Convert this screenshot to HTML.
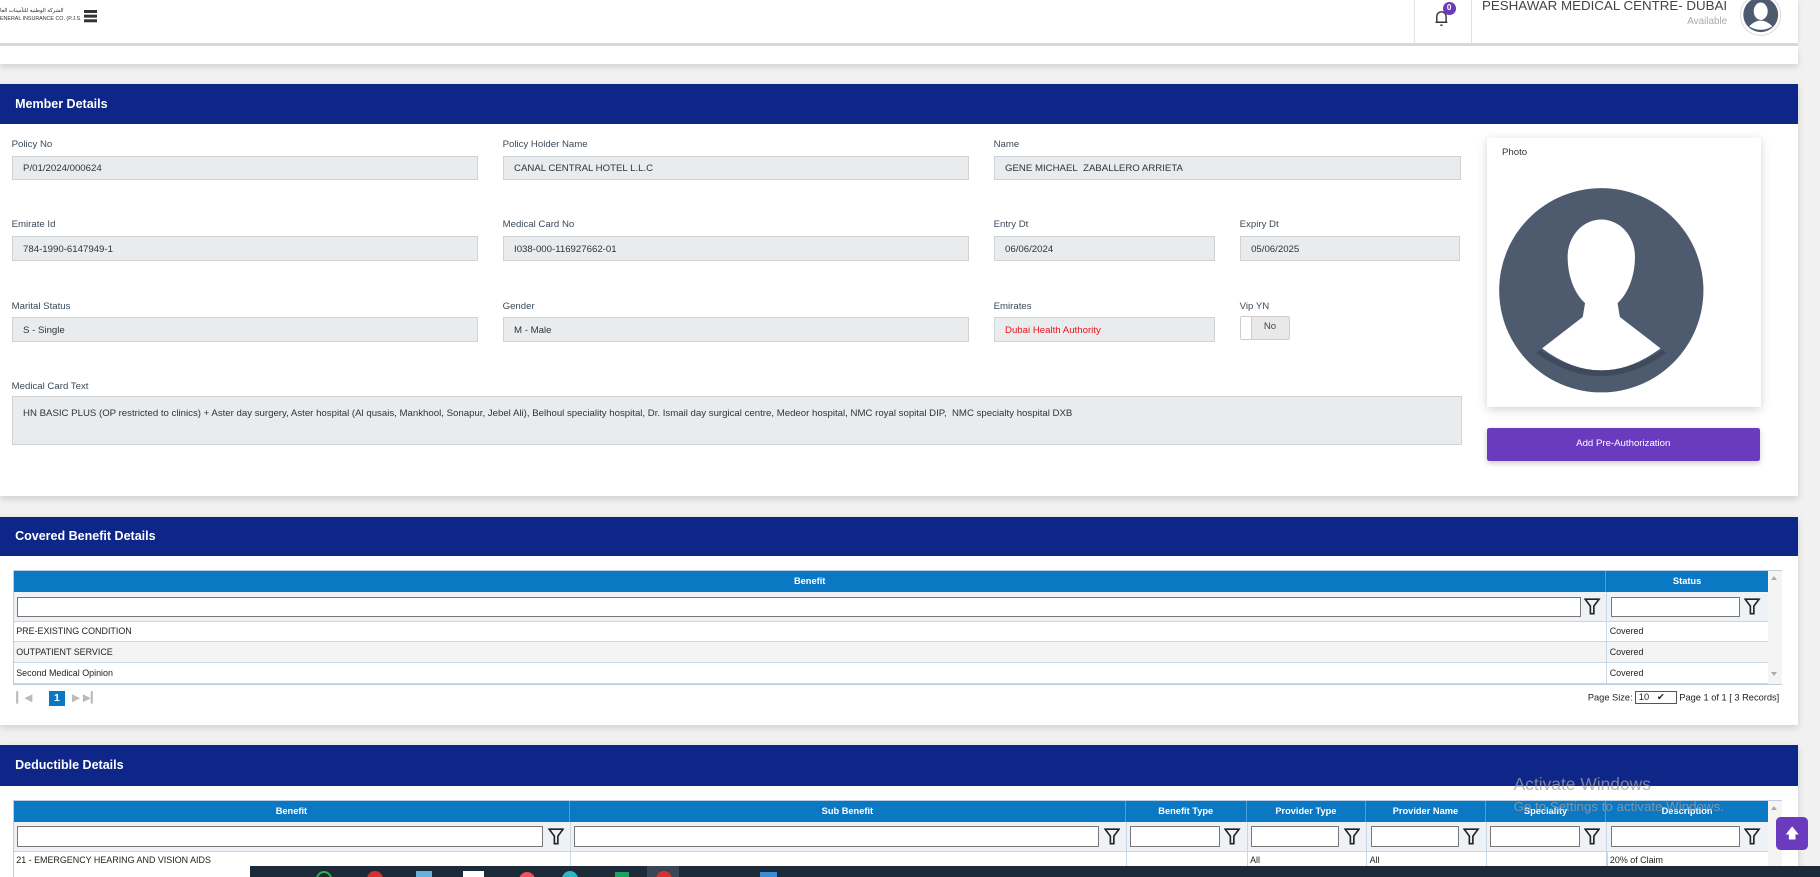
<!DOCTYPE html>
<html><head><meta charset="utf-8"><style>
html,body{margin:0;padding:0;}
body{width:1820px;height:877px;overflow:hidden;background:#f1f1f1;font-family:"Liberation Sans",Arial,sans-serif;}
#w{zoom:1.160714;position:relative;width:1568px;height:756px;overflow:hidden;background:#f1f1f1;}
.a{position:absolute;}
.card{position:absolute;background:#fff;box-shadow:0 2px 6px rgba(0,0,0,.15);}
.bar{position:absolute;background:#0e2687;color:#fff;font-weight:bold;font-size:10.8px;padding-left:13px;box-sizing:border-box;}
.lbl{position:absolute;font-size:8.3px;color:#3a4a5a;}
.inp{position:absolute;height:21px;background:#e9ebed;border:1px solid #cfd3d6;box-sizing:border-box;font-size:8.3px;color:#333;padding:6px 0 0 9px;}
.th{position:absolute;background:#0b78c3;color:#fff;font-weight:bold;font-size:8px;text-align:center;height:18px;line-height:18px;border-right:1px solid #4aa0dd;box-sizing:border-box;}
.fc{position:absolute;background:#eef2f6;height:26px;box-sizing:border-box;}
.fc i{position:absolute;left:3px;top:4px;height:18px;border:1px solid #777;background:#fff;box-sizing:border-box;}
.fc svg{position:absolute;top:5px;}
.row{position:absolute;height:18px;line-height:18px;font-size:7.7px;color:#222;border-bottom:1px solid #c9d6e3;box-sizing:border-box;padding-left:2px;}
</style></head><body><div id="w">
<div class="a" style="left:0;top:0;width:1549px;height:37px;background:#fff;box-shadow:0 1px 3px rgba(0,0,0,.15)"></div>
<div class="a" style="left:0;top:37px;width:1549px;height:3px;background:#d3ddd0"></div>
<div class="a" style="left:0;top:40px;width:1549px;height:15px;background:#fff;box-shadow:0 3px 5px rgba(0,0,0,.12)"></div>
<div class="a" style="left:0;top:6px;font-size:4.6px;color:#333;line-height:7px;width:70px;overflow:hidden;white-space:nowrap">الشركة الوطنية للتأمينات العا<br>ENERAL INSURANCE CO. (P.J.S.C)</div>
<div class="a" style="left:72px;top:9px;width:12px;height:2px;background:#333;box-shadow:0 4px 0 #333,0 8px 0 #333"></div>
<div class="a" style="left:1218px;top:0;width:1px;height:37px;background:#e3e3e3"></div>
<div class="a" style="left:1267px;top:0;width:1px;height:37px;background:#e3e3e3"></div>
<svg class="a" style="left:1233px;top:5px" width="20" height="20" viewBox="0 0 20 20"><path d="M4 14h10M5 14V9a4 4 0 0 1 8 0v5M8 16.5h2" stroke="#333" stroke-width="1.2" fill="none"/></svg>
<div class="a" style="left:1243px;top:2px;width:11px;height:11px;border-radius:50%;background:#6a3bbd;color:#fff;font-size:7px;font-weight:bold;text-align:center;line-height:11px">0</div>
<div class="a" style="left:1200px;width:288px;text-align:right;top:-2px;font-size:11.5px;color:#444">PESHAWAR MEDICAL CENTRE- DUBAI</div>
<div class="a" style="left:1400px;width:88px;text-align:right;top:14px;font-size:8.5px;color:#aaa">Available</div>
<div class="a" style="left:1499px;top:-5px;width:34px;height:34px;border-radius:50%;background:#fff;border:1px solid #ddd;overflow:hidden">
<svg width="34" height="34" viewBox="0 0 34 34"><circle cx="17" cy="17" r="15" fill="#4e5b6e"/><ellipse cx="17" cy="14" rx="6" ry="7.5" fill="#fff"/><path d="M7 27q10-10 20 0q-10 6-20 0z" fill="#fff"/></svg></div>
<div class="card" style="left:0;top:72px;width:1549px;height:355px"></div>
<div class="bar" style="left:0;top:72px;width:1549px;height:35px;line-height:35px">Member Details</div>
<div class="lbl" style="left:10px;top:120px">Policy No</div><div class="inp" style="left:10px;top:134px;width:402px">P/01/2024/000624</div>
<div class="lbl" style="left:433px;top:120px">Policy Holder Name</div><div class="inp" style="left:433px;top:134px;width:402px">CANAL CENTRAL HOTEL L.L.C</div>
<div class="lbl" style="left:856px;top:120px">Name</div><div class="inp" style="left:856px;top:134px;width:403px">GENE MICHAEL&nbsp; ZABALLERO ARRIETA</div>
<div class="lbl" style="left:10px;top:189px">Emirate Id</div><div class="inp" style="left:10px;top:203px;width:402px;height:22px">784-1990-6147949-1</div>
<div class="lbl" style="left:433px;top:189px">Medical Card No</div><div class="inp" style="left:433px;top:203px;width:402px;height:22px">I038-000-116927662-01</div>
<div class="lbl" style="left:856px;top:189px">Entry Dt</div><div class="inp" style="left:856px;top:203px;width:191px;height:22px">06/06/2024</div>
<div class="lbl" style="left:1068px;top:189px">Expiry Dt</div><div class="inp" style="left:1068px;top:203px;width:190px;height:22px">05/06/2025</div>
<div class="lbl" style="left:10px;top:259px">Marital Status</div><div class="inp" style="left:10px;top:273px;width:402px;height:22px">S - Single</div>
<div class="lbl" style="left:433px;top:259px">Gender</div><div class="inp" style="left:433px;top:273px;width:402px;height:22px">M - Male</div>
<div class="lbl" style="left:856px;top:259px">Emirates</div><div class="inp" style="left:856px;top:273px;width:191px;height:22px;color:#e8141b">Dubai Health Authority</div>
<div class="lbl" style="left:1068px;top:259px">Vip YN</div>
<div class="a" style="left:1068px;top:272px;width:43px;height:21px;background:#e9e9e9;border:1px solid #ccc;border-radius:2px;box-sizing:border-box"><div style="position:absolute;left:0;top:0;width:9px;height:19px;background:#fff;border-right:1px solid #ccc"></div><div style="position:absolute;left:20px;top:4px;font-size:8.3px;color:#444">No</div></div>
<div class="lbl" style="left:10px;top:328px">Medical Card Text</div>
<div class="inp" style="left:10px;top:341px;width:1250px;height:42px;padding-top:10px">HN BASIC PLUS (OP restricted to clinics) + Aster day surgery, Aster hospital (Al qusais, Mankhool, Sonapur, Jebel Ali), Belhoul speciality hospital, Dr. Ismail day surgical centre, Medeor hospital, NMC royal sopital DIP,&nbsp; NMC specialty hospital DXB</div>
<div class="card" style="left:1281px;top:119px;width:236px;height:232px;box-shadow:0 2px 8px rgba(0,0,0,.18)"></div>
<div class="lbl" style="left:1294px;top:127px;color:#333">Photo</div>
<svg class="a" style="left:1291px;top:161px" width="178" height="178" viewBox="0 0 178 178"><circle cx="89" cy="89" r="88" fill="#4e5b6e"/><path d="M60 60a29 32 0 0 1 58 0c0 20-8 34-15 40l2 12 35 27q-51 38-102 0l35-27 2-12c-7-6-15-20-15-40z" fill="#fff"/><path d="M36 140q53 36 106 0l3 3q-56 40-112 0z" fill="#3f4b5c"/></svg>
<div class="a" style="left:1281px;top:369px;width:235px;height:28px;background:#6a3bbd;border-radius:2px;color:#fff;font-size:8.3px;text-align:center;line-height:28px;box-shadow:0 2px 5px rgba(0,0,0,.2)">Add Pre-Authorization</div>
<div class="card" style="left:0;top:445px;width:1549px;height:180px"></div>
<div class="bar" style="left:0;top:445px;width:1549px;height:34px;line-height:34px">Covered Benefit Details</div>
<div class="a" style="left:11px;top:491px;width:1524px;height:99px;border:1px solid #b9cfe3;box-sizing:border-box"></div>
<div class="th" style="left:12px;top:492px;width:1372px">Benefit</div>
<div class="th" style="left:1384px;top:492px;width:139px;border-right:none">Status</div>
<div class="a" style="left:1523px;top:492px;width:12px;height:97px;background:#f4f4f4"><div style="position:absolute;left:3px;top:4px;border:3px solid transparent;border-bottom:4px solid #aaa;border-top:none"></div><div style="position:absolute;left:3px;top:87px;border:3px solid transparent;border-top:4px solid #aaa;border-bottom:none"></div></div>
<div class="fc" style="left:12px;top:510px;width:1372px;border-bottom:1px solid #c9d6e3"><i style="width:1347px"></i><svg style="left:1353px" width="14" height="15" viewBox="0 0 14 15"><path d="M1 1h12L8.5 7v6.5l-3 0V7z" fill="none" stroke="#222" stroke-width="1.4"/></svg></div>
<div class="fc" style="left:1384px;top:510px;width:139px;border-bottom:1px solid #c9d6e3;border-left:1px solid #c9d6e3"><i style="width:111px"></i><svg style="left:118px" width="14" height="15" viewBox="0 0 14 15"><path d="M1 1h12L8.5 7v6.5l-3 0V7z" fill="none" stroke="#222" stroke-width="1.4"/></svg></div>
<div class="row" style="left:12px;top:535px;width:1372px">PRE-EXISTING CONDITION</div><div class="row" style="left:1384px;top:535px;width:139px;border-left:1px solid #c9d6e3">Covered</div>
<div class="row" style="left:12px;top:553px;width:1372px;background:#f4f4f4">OUTPATIENT SERVICE</div><div class="row" style="left:1384px;top:553px;width:139px;background:#f4f4f4;border-left:1px solid #c9d6e3">Covered</div>
<div class="row" style="left:12px;top:571px;width:1372px">Second Medical Opinion</div><div class="row" style="left:1384px;top:571px;width:139px;border-left:1px solid #c9d6e3">Covered</div>
<div class="a" style="left:14px;top:596px;font-size:9px;color:#bbb">&#9614;&#9664;</div>
<div class="a" style="left:42px;top:595px;width:14px;height:13px;background:#0b78c3;color:#fff;font-size:9px;font-weight:bold;text-align:center;line-height:13px">1</div>
<div class="a" style="left:62px;top:596px;font-size:9px;color:#bbb">&#9654; &#9654;&#9614;</div>
<div class="a" style="left:1368px;top:595px;font-size:8px;color:#222">Page Size: <span style="display:inline-block;width:34px;height:10px;border:1px solid #555;font-size:8px;line-height:10px;vertical-align:middle">&nbsp;10&nbsp;&nbsp;&nbsp;&#10004;</span> Page 1 of 1 [ 3 Records]</div>
<div class="card" style="left:0;top:642px;width:1549px;height:120px"></div>
<div class="bar" style="left:0;top:642px;width:1549px;height:35px;line-height:35px">Deductible Details</div>
<div class="a" style="left:11px;top:689px;width:1524px;height:70px;border:1px solid #b9cfe3;box-sizing:border-box"></div>
<div class="th" style="left:12px;top:690px;width:479px">Benefit</div>
<div class="th" style="left:491px;top:690px;width:479px">Sub Benefit</div>
<div class="th" style="left:970px;top:690px;width:104px">Benefit Type</div>
<div class="th" style="left:1074px;top:690px;width:103px">Provider Type</div>
<div class="th" style="left:1177px;top:690px;width:103px">Provider Name</div>
<div class="th" style="left:1280px;top:690px;width:104px">Speciality</div>
<div class="th" style="left:1384px;top:690px;width:139px;border-right:none">Description</div>
<div class="a" style="left:1523px;top:690px;width:12px;height:60px;background:#f4f4f4"><div style="position:absolute;left:3px;top:4px;border:3px solid transparent;border-bottom:4px solid #aaa;border-top:none"></div></div>
<div class="fc" style="left:12px;top:708px;width:479px;border-bottom:1px solid #c9d6e3"><i style="width:453px"></i><svg style="left:460px" width="14" height="15" viewBox="0 0 14 15"><path d="M1 1h12L8.5 7v6.5l-3 0V7z" fill="none" stroke="#222" stroke-width="1.4"/></svg></div>
<div class="fc" style="left:491px;top:708px;width:479px;border-bottom:1px solid #c9d6e3;border-left:1px solid #c9d6e3"><i style="width:452px"></i><svg style="left:459px" width="14" height="15" viewBox="0 0 14 15"><path d="M1 1h12L8.5 7v6.5l-3 0V7z" fill="none" stroke="#222" stroke-width="1.4"/></svg></div>
<div class="fc" style="left:970px;top:708px;width:104px;border-bottom:1px solid #c9d6e3;border-left:1px solid #c9d6e3"><i style="width:77px"></i><svg style="left:84px" width="14" height="15" viewBox="0 0 14 15"><path d="M1 1h12L8.5 7v6.5l-3 0V7z" fill="none" stroke="#222" stroke-width="1.4"/></svg></div>
<div class="fc" style="left:1074px;top:708px;width:103px;border-bottom:1px solid #c9d6e3;border-left:1px solid #c9d6e3"><i style="width:76px"></i><svg style="left:83px" width="14" height="15" viewBox="0 0 14 15"><path d="M1 1h12L8.5 7v6.5l-3 0V7z" fill="none" stroke="#222" stroke-width="1.4"/></svg></div>
<div class="fc" style="left:1177px;top:708px;width:103px;border-bottom:1px solid #c9d6e3;border-left:1px solid #c9d6e3"><i style="width:76px"></i><svg style="left:83px" width="14" height="15" viewBox="0 0 14 15"><path d="M1 1h12L8.5 7v6.5l-3 0V7z" fill="none" stroke="#222" stroke-width="1.4"/></svg></div>
<div class="fc" style="left:1280px;top:708px;width:104px;border-bottom:1px solid #c9d6e3;border-left:1px solid #c9d6e3"><i style="width:77px"></i><svg style="left:84px" width="14" height="15" viewBox="0 0 14 15"><path d="M1 1h12L8.5 7v6.5l-3 0V7z" fill="none" stroke="#222" stroke-width="1.4"/></svg></div>
<div class="fc" style="left:1384px;top:708px;width:139px;border-bottom:1px solid #c9d6e3;border-left:1px solid #c9d6e3"><i style="width:111px"></i><svg style="left:118px" width="14" height="15" viewBox="0 0 14 15"><path d="M1 1h12L8.5 7v6.5l-3 0V7z" fill="none" stroke="#222" stroke-width="1.4"/></svg></div>
<div class="row" style="left:12px;top:732px;width:479px;border:none">21 - EMERGENCY HEARING AND VISION AIDS</div>
<div class="a" style="left:491px;top:733px;width:1px;height:14px;background:#c9d6e3"></div>
<div class="a" style="left:970px;top:733px;width:1px;height:14px;background:#c9d6e3"></div>
<div class="a" style="left:1074px;top:733px;width:1px;height:14px;background:#c9d6e3"></div>
<div class="a" style="left:1177px;top:733px;width:1px;height:14px;background:#c9d6e3"></div>
<div class="a" style="left:1280px;top:733px;width:1px;height:14px;background:#c9d6e3"></div>
<div class="a" style="left:1384px;top:733px;width:1px;height:14px;background:#c9d6e3"></div>
<div class="row" style="left:1075px;top:732px;width:100px;border:none">All</div>
<div class="row" style="left:1178px;top:732px;width:100px;border:none">All</div>
<div class="row" style="left:1385px;top:732px;width:130px;border:none">20% of Claim</div>
<div class="a" style="left:1304px;top:667px;font-size:15px;color:rgba(160,160,160,.75)">Activate Windows</div>
<div class="a" style="left:1304px;top:688px;font-size:11.5px;color:rgba(160,160,160,.75)">Go to Settings to activate Windows.</div>
<div class="a" style="left:1530px;top:704px;width:28px;height:28px;background:#6a3bbd;border-radius:4px;color:#fff;text-align:center;font-size:12px;line-height:28px">&#129093;</div>
<div class="a" style="left:215px;top:746px;width:1353px;height:10px;background:#1d2b38"></div>
<div class="a" style="left:557px;top:746px;width:28px;height:10px;background:#3a4652"></div>
<div class="a" style="left:272px;top:750px;width:14px;height:14px;border-radius:50%;border:2px solid #2db34a;box-sizing:border-box"></div>
<div class="a" style="left:316px;top:750px;width:14px;height:14px;border-radius:50%;background:#d83030"></div>
<div class="a" style="left:358px;top:750px;width:14px;height:10px;background:#6ab0d8"></div>
<div class="a" style="left:399px;top:750px;width:18px;height:10px;background:#fff"></div>
<div class="a" style="left:447px;top:751px;width:14px;height:14px;border-radius:50%;background:#f05060"></div>
<div class="a" style="left:484px;top:750px;width:14px;height:14px;border-radius:50%;background:#2ab8c8"></div>
<div class="a" style="left:530px;top:751px;width:12px;height:10px;background:#20a060"></div>
<div class="a" style="left:565px;top:750px;width:14px;height:14px;border-radius:50%;background:#d83030"></div>
<div class="a" style="left:655px;top:751px;width:14px;height:10px;background:#3a8ad8"></div>
</div></body></html>
